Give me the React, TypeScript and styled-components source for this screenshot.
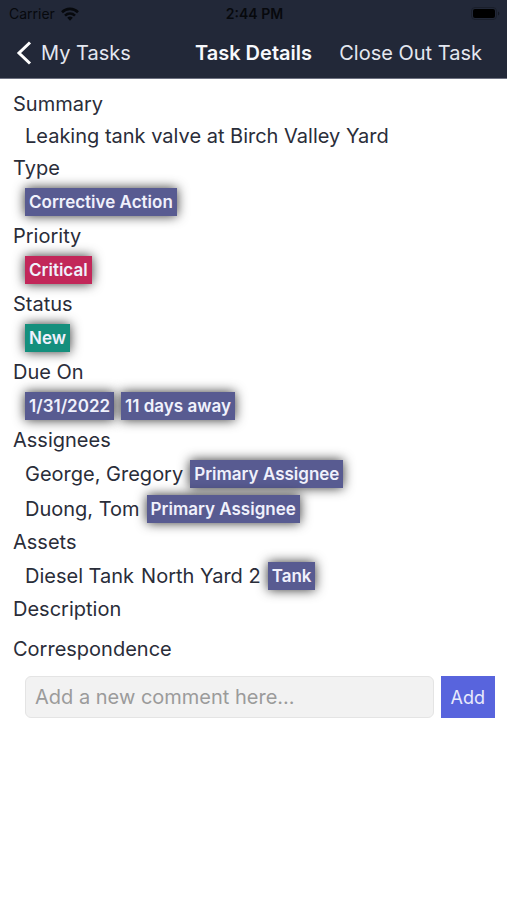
import React from "react";
import styled, { createGlobalStyle } from "styled-components";

const GlobalStyle = createGlobalStyle`
  *, *::before, *::after { box-sizing: border-box; }
  body {
    margin: 0;
    background: #ffffff;
    color: #2a2d39;
    font-family: Inter, "Liberation Sans", sans-serif;
    font-size: 20px;
  }
`;

const Header = styled.header`
  background: #222838;
  border-bottom: 1px solid #6d7180;
`;

const StatusBar = styled.div`
  display: grid;
  grid-template-columns: 1fr auto 1fr;
  align-items: center;
  height: 27px;
  padding: 0 7px 0 9px;
  color: #07090d;
  font-size: 14px;
`;

const Carrier = styled.div`
  display: flex;
  align-items: center;
  gap: 6px;
`;

const Time = styled.time`
  font-weight: 600;
`;

const Battery = styled.svg`
  justify-self: end;
`;

const NavBar = styled.nav`
  display: grid;
  grid-template-columns: 1fr auto 1fr;
  align-items: center;
  height: 51px;
  padding: 0 16px;
`;

const NavButton = styled.button<{ $end?: boolean }>`
  display: flex;
  align-items: center;
  justify-self: ${(p) => (p.$end ? "end" : "start")};
  gap: 9px;
  padding: ${(p) => (p.$end ? "0 9px 0 0" : "0")};
  border: 0;
  background: none;
  color: #e4e7f0;
  font: inherit;
  white-space: nowrap;
`;

const Title = styled.h1`
  margin: 0;
  color: #f7f8fc;
  font-size: 20px;
  font-weight: 600;
  white-space: nowrap;
`;

const Content = styled.main`
  padding: 9px 12px 16px 13px;
`;

const Section = styled.section<{ $spaced?: boolean }>`
  margin-top: ${(p) => (p.$spaced ? 8 : 0)}px;
`;

const Label = styled.h2`
  margin: 0;
  font-size: 20px;
  font-weight: 400;
  line-height: 32px;
`;

const Row = styled.div<{ $height: number }>`
  display: flex;
  align-items: center;
  gap: 7px;
  min-height: ${(p) => p.$height}px;
  padding-left: 12px;
`;

const tones = { indigo: "#585b91", red: "#c22759", green: "#158f7d" };

const Tag = styled.span<{ $tone?: keyof typeof tones }>`
  padding: 0 4px;
  background: ${(p) => tones[p.$tone ?? "indigo"]};
  box-shadow: 0 0 12px rgba(0, 0, 0, 0.8);
  color: #f0f1fc;
  font-size: 17px;
  font-weight: 600;
  line-height: 28px;
  white-space: nowrap;
`;

const CommentForm = styled.form`
  display: flex;
  gap: 7px;
  margin-top: 11px;
  padding-left: 12px;
`;

const CommentInput = styled.input`
  flex: 1;
  min-width: 0;
  height: 42px;
  padding: 0 9px;
  border: 1px solid #e4e4e4;
  border-radius: 6px;
  background: #f2f2f2;
  color: #2a2d39;
  font: inherit;
  &::placeholder { color: #9b9b9b; opacity: 1; }
`;

const AddButton = styled.button`
  height: 42px;
  padding: 0 10px;
  border: 0;
  background: #5864dd;
  color: #e8eafc;
  font: inherit;
  font-size: 18px;
`;

export default function App() {
  return (
    <>
      <GlobalStyle />
      <Header>
        <StatusBar>
          <Carrier>
            Carrier
            <svg width="18" height="14" viewBox="0 0 18 14" fill="none" stroke="currentColor" strokeWidth="2.6" aria-hidden="true">
              <path d="M1 5.2C5.6.8 12.4.8 17 5.2" />
              <path d="M4 8.6c2.9-2.7 7.1-2.7 10 0" />
              <path d="M6.2 10.8a4 4 0 0 1 5.6 0L9 13.8z" fill="currentColor" stroke="none" />
            </svg>
          </Carrier>
          <Time>2:44 PM</Time>
          <Battery width="29" height="13" viewBox="0 0 29 13" aria-hidden="true">
            <rect x=".5" y=".5" width="25" height="12" rx="3.5" fill="none" stroke="#1a1f2b" />
            <rect x="2" y="2" width="22" height="9" rx="2" fill="#000" />
            <path d="M27 4.5c1.8.7 1.8 3.3 0 4z" fill="#141822" />
          </Battery>
        </StatusBar>
        <NavBar>
          <NavButton type="button">
            <svg width="16" height="24" viewBox="0 0 16 24" fill="none" stroke="#fff" strokeWidth="3" aria-hidden="true">
              <path d="M14 1.5 3 12l11 10.5" />
            </svg>
            My Tasks
          </NavButton>
          <Title>Task Details</Title>
          <NavButton type="button" $end>Close Out Task</NavButton>
        </NavBar>
      </Header>
      <Content>
        <Section>
          <Label>Summary</Label>
          <Row $height={32}>Leaking tank valve at Birch Valley Yard</Row>
        </Section>
        <Section>
          <Label>Type</Label>
          <Row $height={36}><Tag>Corrective Action</Tag></Row>
        </Section>
        <Section>
          <Label>Priority</Label>
          <Row $height={36}><Tag $tone="red">Critical</Tag></Row>
        </Section>
        <Section>
          <Label>Status</Label>
          <Row $height={36}><Tag $tone="green">New</Tag></Row>
        </Section>
        <Section>
          <Label>Due On</Label>
          <Row $height={36}><Tag>1/31/2022</Tag><Tag>11 days away</Tag></Row>
        </Section>
        <Section>
          <Label>Assignees</Label>
          <Row $height={35}>George, Gregory<Tag>Primary Assignee</Tag></Row>
          <Row $height={35}>Duong, Tom<Tag>Primary Assignee</Tag></Row>
        </Section>
        <Section>
          <Label>Assets</Label>
          <Row $height={35}><span>Diesel Tank</span><span>North Yard 2</span><Tag>Tank</Tag></Row>
        </Section>
        <Section>
          <Label>Description</Label>
        </Section>
        <Section $spaced>
          <Label>Correspondence</Label>
          <CommentForm onSubmit={(e) => e.preventDefault()}>
            <CommentInput type="text" aria-label="Comment" placeholder="Add a new comment here..." />
            <AddButton type="submit">Add</AddButton>
          </CommentForm>
        </Section>
      </Content>
    </>
  );
}
